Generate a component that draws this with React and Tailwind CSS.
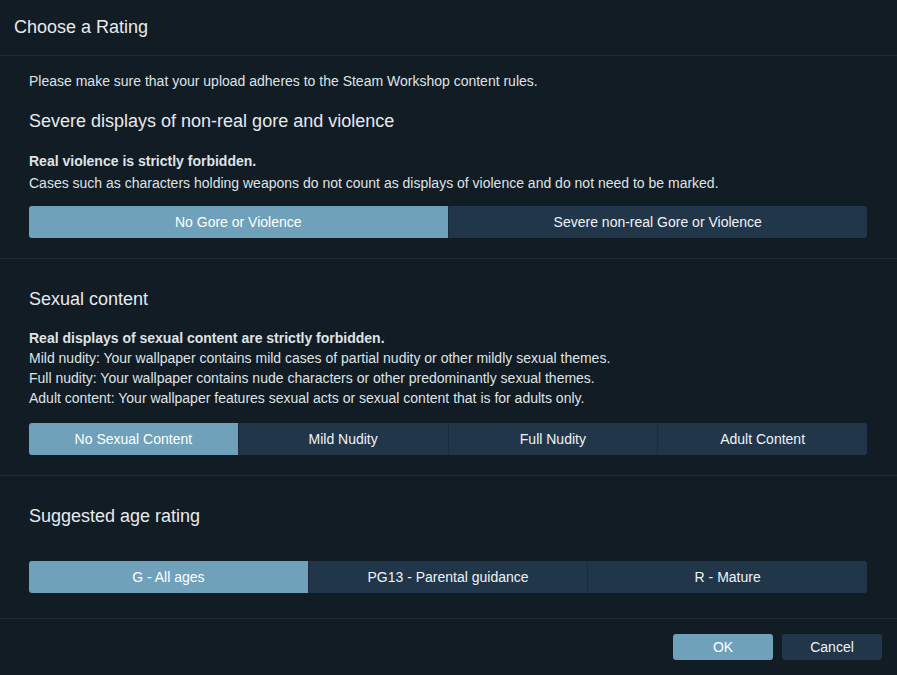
const font = { fontFamily: '"Liberation Sans", Arial, sans-serif' };

function Segmented({ options, selected }) {
    return (
        <div className="flex h-[32px] rounded-[3px] overflow-hidden">
            {options.map((opt, i) => (
                <button
                    key={opt}
                    className={
                        'flex-1 flex items-center justify-center text-[14px] ' +
                        (i === selected
                            ? 'bg-[#6fa2ba] text-white'
                            : 'bg-[#22364a] text-[#eef3f7]') +
                        (i > 0 ? ' border-l border-[#1c2c3d]' : '')
                    }
                >
                    {opt}
                </button>
            ))}
        </div>
    );
}

export default function App() {
    return (
        <div className="w-[897px] h-[675px] bg-[#121c25] text-[#dfe3e6] flex flex-col overflow-hidden" style={font}>
            {/* Header */}
            <div className="h-[56px] flex items-center px-[14px] pb-[1px] border-b border-[#1f2e3c] shrink-0">
                <h1 className="text-[18px] text-[#e6eaed]">Choose a Rating</h1>
            </div>

            {/* Gore section */}
            <div className="pl-[29px] pr-[30px] pt-[15px] pb-[20px] border-b border-[#1f2e3c]">
                <p className="text-[14px] leading-[20px]">
                    Please make sure that your upload adheres to the Steam Workshop content rules.
                </p>
                <h2 className="text-[18px] leading-[24px] mt-[18px] text-[#e6eaed]">
                    Severe displays of non-real gore and violence
                </h2>
                <div className="mt-[17px] text-[14px] leading-[22px]">
                    <p className="font-bold">Real violence is strictly forbidden.</p>
                    <p>Cases such as characters holding weapons do not count as displays of violence and do not need to be marked.</p>
                </div>
                <div className="mt-[12px]">
                    <Segmented options={['No Gore or Violence', 'Severe non-real Gore or Violence']} selected={0} />
                </div>
            </div>

            {/* Sexual section */}
            <div className="pl-[29px] pr-[30px] pt-[28px] pb-[20px] border-b border-[#1f2e3c]">
                <h2 className="text-[18px] leading-[24px] text-[#e6eaed]">Sexual content</h2>
                <div className="mt-[17px] text-[14px] leading-[20px]">
                    <p className="font-bold">Real displays of sexual content are strictly forbidden.</p>
                    <p>Mild nudity: Your wallpaper contains mild cases of partial nudity or other mildly sexual themes.</p>
                    <p>Full nudity: Your wallpaper contains nude characters or other predominantly sexual themes.</p>
                    <p>Adult content: Your wallpaper features sexual acts or sexual content that is for adults only.</p>
                </div>
                <div className="mt-[15px]">
                    <Segmented options={['No Sexual Content', 'Mild Nudity', 'Full Nudity', 'Adult Content']} selected={0} />
                </div>
            </div>

            {/* Age section */}
            <div className="pl-[29px] pr-[30px] pt-[28px] pb-[25px] border-b border-[#1f2e3c]">
                <h2 className="text-[18px] leading-[24px] text-[#e6eaed]">Suggested age rating</h2>
                <div className="mt-[33px]">
                    <Segmented options={['G - All ages', 'PG13 - Parental guidance', 'R - Mature']} selected={0} />
                </div>
            </div>

            {/* Footer */}
            <div className="flex justify-end gap-[9px] pt-[15px] pr-[15px]">
                <button className="w-[100px] h-[26px] rounded-[3px] bg-[#6fa2ba] text-white text-[14px]">OK</button>
                <button className="w-[100px] h-[26px] rounded-[3px] bg-[#22364a] text-[#eef3f7] text-[14px]">Cancel</button>
            </div>
        </div>
    );
}
